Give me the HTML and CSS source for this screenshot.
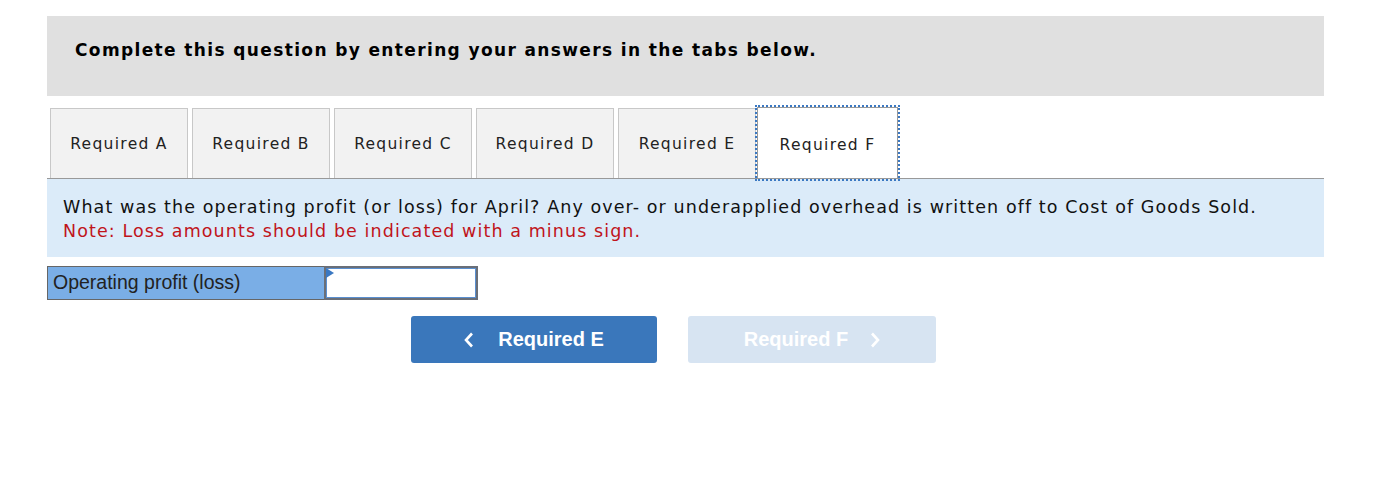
FILE: index.html
```html
<!DOCTYPE html>
<html>
<head>
<meta charset="utf-8">
<link rel="stylesheet" href="styles.css">
</head>
<body>
<div class="wrap">
  <div class="header">Complete this question by entering your answers in the tabs below.</div>
  <div class="tabs">
    <div class="tab">Required A</div>
    <div class="tab">Required B</div>
    <div class="tab">Required C</div>
    <div class="tab">Required D</div>
    <div class="tab">Required E</div>
    <div class="tab active">Required F</div>
  </div>
  <div class="panel">
    <div class="q">What was the operating profit (or loss) for April? Any over- or underapplied overhead is written off to Cost of Goods Sold.</div>
    <div class="note">Note: Loss amounts should be indicated with a minus sign.</div>
  </div>
  <div class="row">
    <div class="label">Operating profit (loss)</div>
    <div class="input"><span class="flag"></span></div>
  </div>
  <div class="nav">
    <div class="btn prev"><svg class="chev" width="10" height="16" viewBox="0 0 10 16"><path d="M8 1.5 L2 8 L8 14.5" fill="none" stroke="#fff" stroke-width="2.6"/></svg>Required E</div>
    <div class="btn next">Required F<svg class="chev" width="10" height="16" viewBox="0 0 10 16"><path d="M2 1.5 L8 8 L2 14.5" fill="none" stroke="#fff" stroke-width="2.6"/></svg></div>
  </div>
</div>
</body>
</html>
```
FILE: styles.css
```css
html, body { margin: 0; padding: 0; background: #fff; }
.wrap { padding: 16px 0 0 47px; width: 1277px; }
.header {
  background: #e0e0e0;
  height: 80px;
  box-sizing: border-box;
  padding: 24px 0 0 28px;
  font-family: "DejaVu Sans", Verdana, sans-serif;
  font-weight: bold;
  font-size: 17px;
  letter-spacing: 1.37px;
  color: #000;
}
.tabs {
  display: flex;
  gap: 4px;
  padding: 12px 0 0 3px;
  border-bottom: 1px solid #999;
  height: 70px;
}
.tab {
  width: 138px;
  box-sizing: border-box;
  border: 1px solid #c8c8c8;
  border-bottom: none;
  background: #f2f2f2;
  font-family: "DejaVu Sans", Verdana, sans-serif;
  font-size: 15.5px;
  letter-spacing: 1.3px;
  color: #222;
  display: flex;
  align-items: center;
  justify-content: center;
  padding-top: 1px;
}
.tab.active {
  background: #fff;
  border: 1px solid #999;
  outline: 2px dotted #3a78c2;
  outline-offset: 0px;
  position: relative;
  z-index: 1;
  height: 72px;
  margin-top: -1px;
  margin-left: -3px;
  width: 141px;
  padding-top: 3px;
}
.panel {
  background: #dbebf9;
  padding: 16px 0 14px 16px;
  font-family: "DejaVu Sans", Verdana, sans-serif;
  font-size: 17.5px;
  letter-spacing: 1.09px;
  line-height: 24px;
  color: #111;
}
.note { color: #c0141b; }
.row {
  display: flex;
  margin-top: 9px;
  height: 34px;
}
.label {
  width: 277px;
  box-sizing: border-box;
  background: #7aaee6;
  border: 1px solid #666;
  border-right: none;
  font-family: "Liberation Sans", Arial, sans-serif;
  font-size: 19.5px;
  color: #222;
  padding: 4px 0 0 5px;
}
.input {
  width: 154px;
  box-sizing: border-box;
  border: 2px solid #6a6f78;
  background: #fff;
  box-shadow: inset 0 0 0 1px #5a8fd0;
  position: relative;
}
.flag {
  position: absolute;
  left: 0; top: 0;
  width: 0; height: 0;
  border-top: 5px solid transparent;
  border-bottom: 5px solid transparent;
  border-left: 8px solid #3a78c2;
}
.nav {
  display: flex;
  gap: 31px;
  padding: 16px 0 0 364px;
}
.btn {
  width: 246px;
  height: 47px;
  border-radius: 3px;
  display: flex;
  align-items: center;
  justify-content: center;
  font-family: "Liberation Sans", Arial, sans-serif;
  font-weight: bold;
  font-size: 20px;
  color: #fff;
}
.prev { background: #3a77bb; }
.next { width: 248px; background: #d7e4f2; }
.chev { display: block; }
.prev .chev { margin-right: 24px; }
.next .chev { margin-left: 22px; }
```
